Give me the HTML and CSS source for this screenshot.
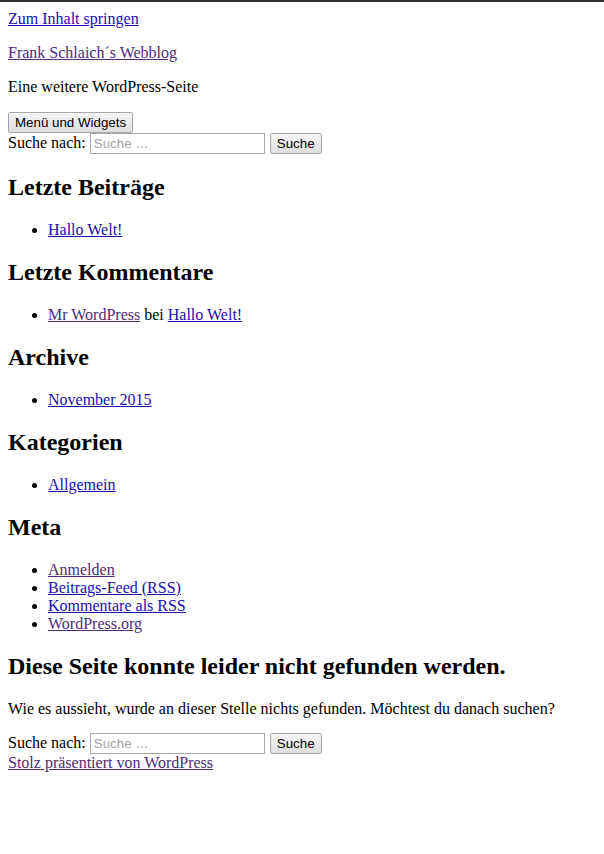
FILE: index.html
```html
<!DOCTYPE html>
<html lang="de">
<head>
<meta charset="utf-8">
<title>Seite nicht gefunden – Frank Schlaich´s Webblog</title>
<link rel="stylesheet" href="styles.css">
</head>
<body>
<div class="site">
  <a class="skip-link lnk" href="#content">Zum Inhalt springen</a>
  <header class="site-header">
    <p class="site-title"><a class="lnk seen" href="#">Frank Schlaich´s Webblog</a></p>
    <p class="site-description">Eine weitere WordPress-Seite</p>
    <button class="btn" type="button">Menü und Widgets</button>
  </header>
  <div class="sidebar">
    <form class="search-form">
      <label>Suche nach: <input class="search-field" type="search" placeholder="Suche …"></label>
      <input class="btn" type="submit" value="Suche">
    </form>
    <section class="widget">
      <h2>Letzte Beiträge</h2>
      <ul>
        <li><a class="lnk" href="#">Hallo Welt!</a></li>
      </ul>
    </section>
    <section class="widget">
      <h2>Letzte Kommentare</h2>
      <ul>
        <li><a class="lnk seen" href="#">Mr WordPress</a> bei <a class="lnk" href="#">Hallo Welt!</a></li>
      </ul>
    </section>
    <section class="widget">
      <h2>Archive</h2>
      <ul>
        <li><a class="lnk" href="#">November 2015</a></li>
      </ul>
    </section>
    <section class="widget">
      <h2>Kategorien</h2>
      <ul>
        <li><a class="lnk" href="#">Allgemein</a></li>
      </ul>
    </section>
    <section class="widget">
      <h2>Meta</h2>
      <ul>
        <li><a class="lnk seen" href="#">Anmelden</a></li>
        <li><a class="lnk" href="#">Beitrags-Feed (<abbr>RSS</abbr>)</a></li>
        <li><a class="lnk" href="#">Kommentare als <abbr>RSS</abbr></a></li>
        <li><a class="lnk seen" href="#">WordPress.org</a></li>
      </ul>
    </section>
  </div>
  <main id="content" class="content">
    <section class="not-found">
      <h1 class="page-title">Diese Seite konnte leider nicht gefunden werden.</h1>
      <p>Wie es aussieht, wurde an dieser Stelle nichts gefunden. Möchtest du danach suchen?</p>
      <form class="search-form">
        <label>Suche nach: <input class="search-field" type="search" placeholder="Suche …"></label>
        <input class="btn" type="submit" value="Suche">
      </form>
    </section>
  </main>
  <footer class="site-footer">
    <a class="lnk seen" href="#">Stolz präsentiert von WordPress</a>
  </footer>
</div>
</body>
</html>
```
FILE: styles.css
```css
html {
  border-top: 2px solid #2e2e2e;
  background: #fff;
}

body {
  margin: 8px;
  font-family: "Liberation Serif", "Times New Roman", serif;
  font-size: 16px;
  color: #000;
}

.lnk {
  color: #1a0dab;
  text-decoration: underline;
}

.lnk.seen {
  color: #4f2a7a;
}

abbr {
  text-decoration: none;
}

.site-header p {
  margin: 16px 0;
}

h1 {
  font-size: 24px;
  margin: 20px 0;
}

h2 {
  font-size: 24px;
  margin: 20px 0;
}

ul {
  margin: 16px 0;
  padding-left: 40px;
}

.search-form {
  margin: 0;
}

.btn {
  box-sizing: border-box;
  font-family: "Liberation Sans", Arial, sans-serif;
  font-size: 13.33px;
  color: #000;
  background: linear-gradient(#f6f6f6, #dedede);
  border: 1px solid #a6a6a6;
  border-radius: 2px;
  padding: 1px 6px;
  height: 21px;
  margin: 0;
}

.search-field {
  box-sizing: border-box;
  font-family: "Liberation Sans", Arial, sans-serif;
  font-size: 13.33px;
  width: 175px;
  height: 21px;
  padding: 1px 3px;
  border: 1px solid #a9a9a9;
  margin: 0 1px 0 0;
}

.search-field::placeholder {
  color: #a3a3a3;
}

.content p {
  margin: 20px 0 15px;
}
```
